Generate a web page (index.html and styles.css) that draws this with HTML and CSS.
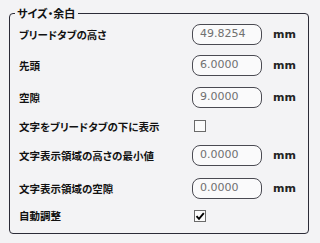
FILE: index.html
```html
<!DOCTYPE html>
<html lang="ja">
<head>
<meta charset="utf-8">
<link rel="stylesheet" href="styles.css">
</head>
<body>
<fieldset class="group">
  <legend class="legend">サイズ・余白</legend>
  <div class="grid">
    <div class="label r-in">ブリードタブの高さ</div>
    <div class="field r-in"><span class="input">49.8254</span></div>
    <div class="unit r-in">mm</div>

    <div class="label r-in">先頭</div>
    <div class="field r-in"><span class="input">6.0000</span></div>
    <div class="unit r-in">mm</div>

    <div class="label r-in">空隙</div>
    <div class="field r-in"><span class="input">9.0000</span></div>
    <div class="unit r-in">mm</div>

    <div class="label r-cb">文字をブリードタブの下に表示</div>
    <div class="field r-cb"><span class="check"></span></div>
    <div class="unit r-cb"></div>

    <div class="label r-in">文字表示領域の高さの最小値</div>
    <div class="field r-in"><span class="input">0.0000</span></div>
    <div class="unit r-in">mm</div>

    <div class="label r-in">文字表示領域の空隙</div>
    <div class="field r-in"><span class="input">0.0000</span></div>
    <div class="unit r-in">mm</div>

    <div class="label r-cb2">自動調整</div>
    <div class="field r-cb2"><span class="check"><svg width="10" height="10" viewBox="0 0 10 10"><path d="M1.5 5.2 L4 7.8 L8.8 2.2" fill="none" stroke="#000" stroke-width="1.9"/></svg></span></div>
    <div class="unit r-cb2"></div>
  </div>
</fieldset>
</body>
</html>
```
FILE: styles.css
```css
html, body {
  margin: 0;
  padding: 0;
  background: #f3f3f5;
  width: 320px;
  height: 243px;
  overflow: hidden;
}
body {
  font-family: "Noto Sans CJK JP", "Noto Sans", sans-serif;
  color: #111;
}
.group {
  margin: 5px 0 0 9px;
  width: 300px;
  height: 229px;
  box-sizing: border-box;
  border: 1px solid #2c2c38;
  border-radius: 4px;
  padding: 0 0 0 9px;
}
.legend {
  margin-left: -4px;
  padding: 0 3px 0 2px;
  font-size: 11px;
  line-height: 16px;
  font-weight: 700;
  font-feature-settings: "palt";
  color: #111;
}
.grid {
  display: grid;
  grid-template-columns: 173px 70px auto;
  grid-template-rows: 29px 32px 32px 26px 33px 32px 23px;
  margin-top: -1px;
}
.grid > div {
  display: flex;
  align-items: center;
}
.label {
  font-size: 10.5px;
  font-weight: 700;
  font-feature-settings: "palt";
  color: #111;
}
.field { justify-content: flex-start; }
.input {
  box-sizing: border-box;
  width: 70px;
  height: 21px;
  border: 1px solid #4a4a52;
  border-radius: 8px;
  background: #fafafb;
  padding: 0 0 0 7px;
  font-family: "DejaVu Sans", sans-serif;
  font-size: 11px;
  line-height: 18px;
  color: #707070;
}
.unit {
  padding-left: 11px;
  font-family: "DejaVu Sans", sans-serif;
  font-size: 11px;
  font-weight: 700;
  color: #222;
}
.check {
  box-sizing: border-box;
  width: 12px;
  height: 12px;
  margin-left: 2px;
  border: 1px solid #6a6a6a;
  background: #fbfbfb;
  display: flex;
  align-items: center;
  justify-content: center;
}
.check svg { display: block; }
```
